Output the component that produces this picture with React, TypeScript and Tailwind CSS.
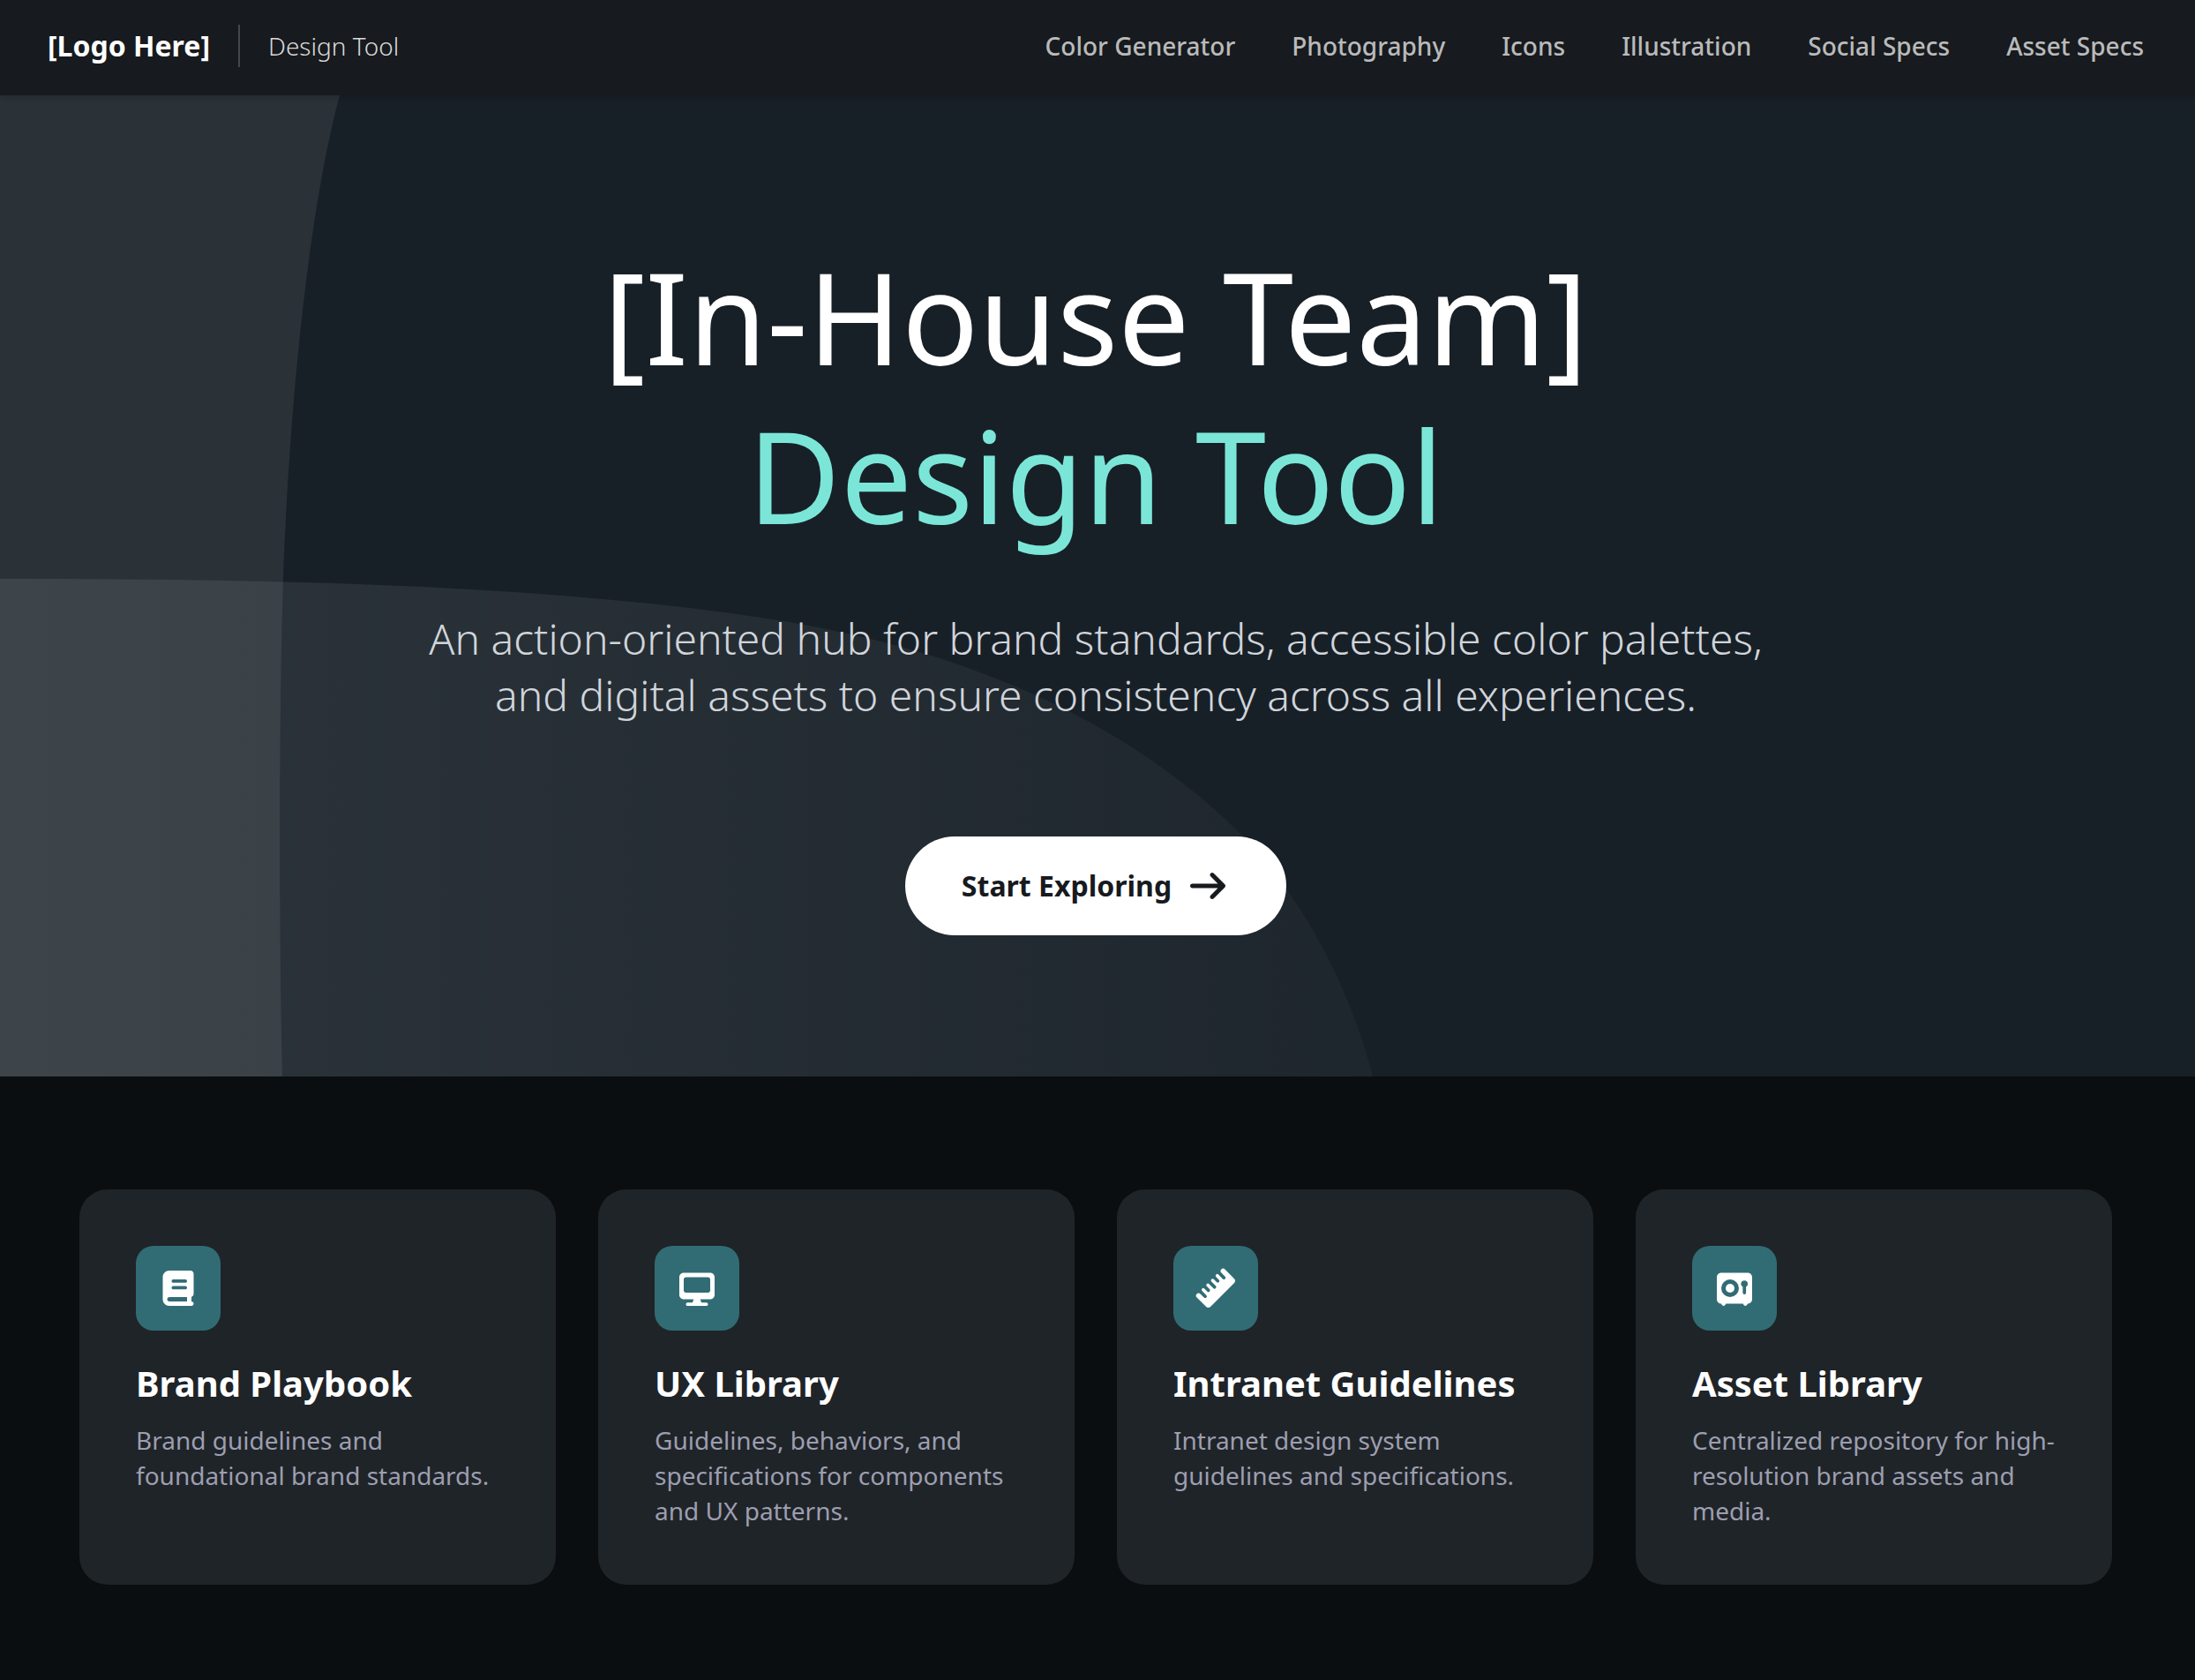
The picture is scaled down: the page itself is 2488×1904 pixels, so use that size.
const links = ["Color Generator", "Photography", "Icons", "Illustration", "Social Specs", "Asset Specs"];

const ArrowIcon = () => (
  <svg viewBox="-64 0 640 512" className="h-10 w-[50px]" fill="currentColor" aria-hidden="true">
    <path d="M502.6 278.6c12.5-12.5 12.5-32.8 0-45.3l-160-160c-12.5-12.5-32.8-12.5-45.3 0s-12.5 32.8 0 45.3L402.7 224 32 224c-17.7 0-32 14.3-32 32s14.3 32 32 32l370.7 0-105.4 105.4c-12.5 12.5-12.5 32.8 0 45.3s32.8 12.5 45.3 0l160-160z" />
  </svg>
);

const BookIcon = () => (
  <svg viewBox="-96 0 640 512" className="h-10 w-[50px]" fill="currentColor" aria-hidden="true">
    <path d="M384 512L96 512c-53 0-96-43-96-96L0 96C0 43 43 0 96 0L400 0c26.5 0 48 21.5 48 48l0 288c0 20.9-13.4 38.7-32 45.3l0 66.7c17.7 0 32 14.3 32 32s-14.3 32-32 32l-32 0zM96 384c-17.7 0-32 14.3-32 32s14.3 32 32 32l256 0 0-64L96 384zm32-232c0 13.3 10.7 24 24 24l176 0c13.3 0 24-10.7 24-24s-10.7-24-24-24l-176 0c-13.3 0-24 10.7-24 24zm24 72c-13.3 0-24 10.7-24 24s10.7 24 24 24l176 0c13.3 0 24-10.7 24-24s-10.7-24-24-24l-176 0z" />
  </svg>
);

const DisplayIcon = () => (
  <svg viewBox="-64 0 640 512" className="h-10 w-[50px]" fill="currentColor" aria-hidden="true">
    <path
      fillRule="evenodd"
      d="M64 32C28.7 32 0 60.7 0 96L0 352c0 35.3 28.7 64 64 64l144 0-16 48-72 0c-13.3 0-24 10.7-24 24s10.7 24 24 24l272 0c13.3 0 24-10.7 24-24s-10.7-24-24-24l-72 0-16-48 144 0c35.3 0 64-28.7 64-64l0-256c0-35.3-28.7-64-64-64L64 32zM96 96l320 0c17.7 0 32 14.3 32 32l0 160c0 17.7-14.3 32-32 32L96 320c-17.7 0-32-14.3-32-32l0-160c0-17.7 14.3-32 32-32z"
    />
  </svg>
);

const RulerIcon = () => (
  <svg viewBox="-320 -320 640 640" className="size-[50px]" fill="currentColor" aria-hidden="true">
    <path
      transform="rotate(-45)"
      d="M-288-100a36 36 0 0 1 72 0V-24a24 24 0 0 0 48 0V-112a24 24 0 0 1 48 0V-54a24 24 0 0 0 48 0V-112a24 24 0 0 1 48 0V-24a24 24 0 0 0 48 0V-112a24 24 0 0 1 48 0V-54a24 24 0 0 0 48 0V-112a24 24 0 0 1 48 0V-24a24 24 0 0 0 48 0V-100a36 36 0 0 1 72 0V88a48 48 0 0 1-48 48H-240a48 48 0 0 1-48-48z"
    />
  </svg>
);

const VaultIcon = () => (
  <svg viewBox="-64 0 640 512" className="h-10 w-[50px]" fill="currentColor" aria-hidden="true">
    <path
      fillRule="evenodd"
      d="M64 32C28.7 32 0 60.7 0 96L0 416c0 35.3 28.7 64 64 64l7 14c5 11 15 18 27 18s22-7 27-18l7-14 248 0 7 14c5 11 15 18 27 18s22-7 27-18l7-14c35.3 0 64-28.7 64-64l0-320c0-35.3-28.7-64-64-64L64 32zM192 128a128 128 0 1 1 0 256 128 128 0 1 1 0-256zM400 144a48 48 0 0 1 24 90l0 86a24 24 0 0 1-48 0l0-86a48 48 0 0 1 24-90z"
    />
    <circle cx="192" cy="256" r="64" />
  </svg>
);

const cards = [
  { title: "Brand Playbook", text: "Brand guidelines and foundational brand standards.", Icon: BookIcon },
  {
    title: "UX Library",
    text: "Guidelines, behaviors, and specifications for components and UX patterns.",
    Icon: DisplayIcon,
  },
  { title: "Intranet Guidelines", text: "Intranet design system guidelines and specifications.", Icon: RulerIcon },
  {
    title: "Asset Library",
    text: "Centralized repository for high-resolution brand assets and media.",
    Icon: VaultIcon,
  },
];

const HeroShapes = () => (
  <svg
    viewBox="0 0 2488 1112"
    preserveAspectRatio="none"
    className="absolute inset-0 h-full w-full"
    aria-hidden="true"
  >
    <defs>
      <linearGradient id="fade" gradientUnits="userSpaceOnUse" x1="0" y1="0" x2="1556" y2="0">
        <stop offset="0" stopColor="#f4ffff" stopOpacity="0.095" />
        <stop offset="1" stopColor="#f4ffff" stopOpacity="0.03" />
      </linearGradient>
    </defs>
    <path d="M0 0H385C350 130 328 350 321 547C316 700 316 950 320 1112H0z" fill="#fff" fillOpacity="0.08" />
    <path
      d="M0 548C330 548 660 556 911 600C1100 634 1280 710 1409 840C1475 908 1530 1010 1556 1112H0z"
      fill="url(#fade)"
    />
  </svg>
);

const App = () => {
  return (
    <div className="min-h-screen bg-[#0a0e11] font-['Noto_Sans',sans-serif]">
      <header className="relative z-10 flex h-[108px] items-center justify-between bg-[#171a1e] pr-[58px] pb-1 pl-[54px] shadow-md">
        <div className="flex items-center gap-8">
          <p className="text-[32px] font-bold text-white">[Logo Here]</p>
          <span className="h-12 w-0.5 bg-[#45484b]" />
          <p className="text-[28px] font-light text-[#d9dadb]">Design Tool</p>
        </div>
        <nav className="flex items-center gap-16">
          {links.map((link) => (
            <a key={link} href="#" className="text-[28px] font-medium text-[#b9babb]">
              {link}
            </a>
          ))}
        </nav>
      </header>
      <section className="relative bg-[#182027] py-40 pr-1">
        <HeroShapes />
        <div className="relative flex flex-col items-center text-center">
          <h1 className="text-[144px] leading-[180px] font-normal text-white">
            [In-House Team]
            <span className="block text-[#7be6d8]">Design Tool</span>
          </h1>
          <p className="mt-16 text-[48px] leading-16 font-light text-[#d1d5db]">
            An action-oriented hub for brand standards, accessible color palettes,
            <br />
            and digital assets to ensure consistency across all experiences.
          </p>
          <button className="mt-32 flex h-28 items-center gap-4 rounded-full bg-white px-16 text-[32px] font-bold text-[#171a1e]">
            Start Exploring
            <ArrowIcon />
          </button>
        </div>
      </section>
      <section className="py-32 pr-1">
        <div className="mx-auto grid max-w-[2304px] grid-cols-4 gap-12">
          {cards.map(({ title, text, Icon }) => (
            <div key={title} className="rounded-[32px] bg-[#1f2428] p-16">
              <div className="flex size-24 items-center justify-center rounded-[20px] bg-[#316c75] text-white">
                <Icon />
              </div>
              <h2 className="mt-8 text-[40px] leading-14 font-bold text-white">{title}</h2>
              <p className="mt-4 text-[28px] leading-10 text-[#9d9eb0]">{text}</p>
            </div>
          ))}
        </div>
      </section>
    </div>
  );
};

export default App;
